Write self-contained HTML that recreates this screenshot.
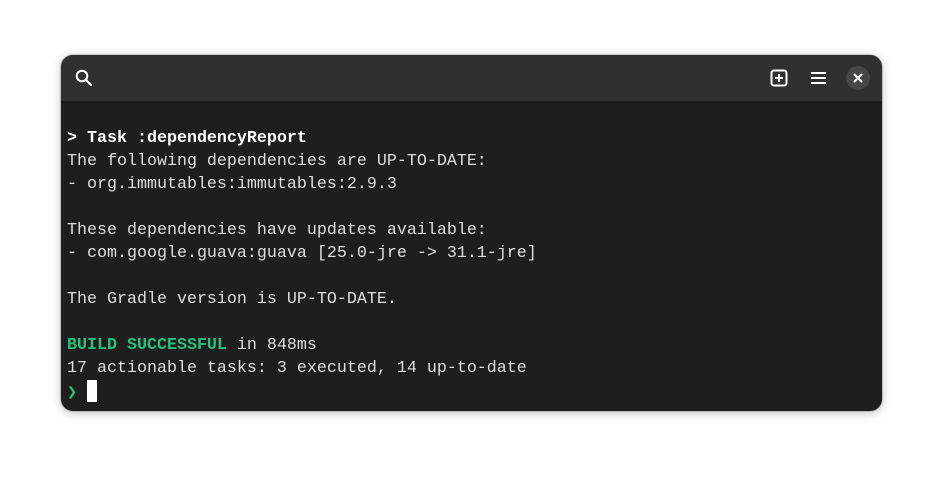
<!DOCTYPE html>
<html><head><style>
html,body{margin:0;padding:0;width:943px;height:479px;background:#fff;overflow:hidden}
.win{position:absolute;left:61px;top:55px;width:821px;height:356px;border-radius:12px;background:#1e1e1e;box-shadow:0 2px 10px rgba(0,0,0,.25),0 0 0 1px rgba(0,0,0,.15);overflow:hidden}
.hdr{position:absolute;left:0;top:0;width:100%;height:46px;background:#303030}
pre{position:absolute;left:6px;top:72px;margin:0;font-family:"Liberation Mono",monospace;font-size:16.67px;line-height:23px;color:#dedede}
b{color:#fff}
.g{color:#26c281;font-weight:bold}
.cur{display:inline-block;width:10px;height:22px;background:#fff;vertical-align:-5px}
.x{position:absolute;left:785px;top:11px;width:24px;height:24px;border-radius:12px;background:#464646}
</style></head><body>
<div class="win">
<div class="hdr">
<svg style="position:absolute;left:14px;top:14px" width="18" height="18" viewBox="0 0 18 18"><circle cx="7" cy="7" r="5.3" fill="none" stroke="#fff" stroke-width="2"/><line x1="11" y1="11" x2="16" y2="16" stroke="#fff" stroke-width="2.2" stroke-linecap="round"/></svg>
<svg style="position:absolute;left:709px;top:14px" width="18" height="18" viewBox="0 0 18 18"><rect x="1.5" y="1.5" width="15" height="15" rx="2.5" fill="none" stroke="#fff" stroke-width="2"/><path d="M9 5v8M5 9h8" stroke="#fff" stroke-width="2"/></svg>
<svg style="position:absolute;left:750px;top:16px" width="15" height="14" viewBox="0 0 15 14"><path d="M0 2h15M0 7h15M0 12h15" stroke="#fff" stroke-width="2"/></svg>
<div class="x"><svg style="position:absolute;left:7px;top:7px" width="10" height="10" viewBox="0 0 10 10"><path d="M1.5 1.5l7 7M8.5 1.5l-7 7" stroke="#fff" stroke-width="2" stroke-linecap="round"/></svg></div>
</div>
<pre><b>&gt; Task :dependencyReport</b>
The following dependencies are UP-TO-DATE:
- org.immutables:immutables:2.9.3

These dependencies have updates available:
- com.google.guava:guava [25.0-jre -&gt; 31.1-jre]

The Gradle version is UP-TO-DATE.

<span class="g">BUILD SUCCESSFUL</span> in 848ms
17 actionable tasks: 3 executed, 14 up-to-date
<span class="g">❯</span> <span class="cur"></span></pre>
</div>
</body></html>
